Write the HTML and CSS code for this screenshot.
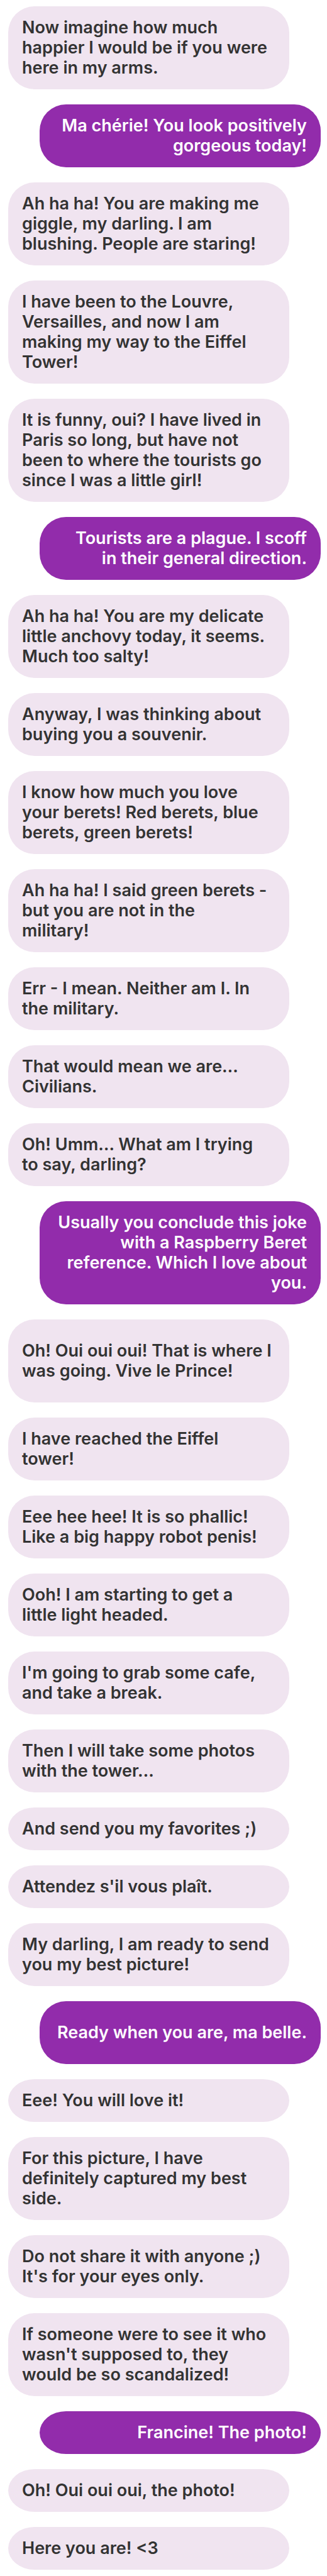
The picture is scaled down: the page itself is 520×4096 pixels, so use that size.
FILE: index.html
```
<!DOCTYPE html>
<html lang="en">
<head>
<meta charset="utf-8">
<meta name="viewport" content="width=device-width, initial-scale=1">
<title>Chat</title>
<link rel="stylesheet" href="styles.css">
</head>
<body>
<main class="chat">
<p class="bubble">Now imagine how much<br>happier I would be if you were<br>here in my arms.</p>
<p class="bubble sent">Ma chérie! You look positively<br>gorgeous today!</p>
<p class="bubble">Ah ha ha! You are making me<br>giggle, my darling. I am<br>blushing. People are staring!</p>
<p class="bubble">I have been to the Louvre,<br>Versailles, and now I am<br>making my way to the Eiffel<br>Tower!</p>
<p class="bubble">It is funny, oui? I have lived in<br>Paris so long, but have not<br>been to where the tourists go<br>since I was a little girl!</p>
<p class="bubble sent">Tourists are a plague. I scoff<br>in their general direction.</p>
<p class="bubble">Ah ha ha! You are my delicate<br>little anchovy today, it seems.<br>Much too salty!</p>
<p class="bubble">Anyway, I was thinking about<br>buying you a souvenir.</p>
<p class="bubble">I know how much you love<br>your berets! Red berets, blue<br>berets, green berets!</p>
<p class="bubble">Ah ha ha! I said green berets -<br>but you are not in the<br>military!</p>
<p class="bubble">Err - I mean. Neither am I. In<br>the military.</p>
<p class="bubble">That would mean we are…<br>Civilians.</p>
<p class="bubble">Oh! Umm… What am I trying<br>to say, darling?</p>
<p class="bubble sent">Usually you conclude this joke<br>with a Raspberry Beret<br>reference. Which I love about<br>you.</p>
<p class="bubble roomy">Oh! Oui oui oui! That is where I<br>was going. Vive le Prince!</p>
<p class="bubble">I have reached the Eiffel<br>tower!</p>
<p class="bubble">Eee hee hee! It is so phallic!<br>Like a big happy robot penis!</p>
<p class="bubble">Ooh! I am starting to get a<br>little light headed.</p>
<p class="bubble">I'm going to grab some cafe,<br>and take a break.</p>
<p class="bubble">Then I will take some photos<br>with the tower…</p>
<p class="bubble">And send you my favorites ;)</p>
<p class="bubble">Attendez s'il vous plaît.</p>
<p class="bubble">My darling, I am ready to send<br>you my best picture!</p>
<p class="bubble sent roomy">Ready when you are, ma belle.</p>
<p class="bubble">Eee! You will love it!</p>
<p class="bubble">For this picture, I have<br>definitely captured my best<br>side.</p>
<p class="bubble">Do not share it with anyone ;)<br>It's for your eyes only.</p>
<p class="bubble">If someone were to see it who<br>wasn't supposed to, they<br>would be so scandalized!</p>
<p class="bubble sent">Francine! The photo!</p>
<p class="bubble">Oh! Oui oui oui, the photo!</p>
<p class="bubble">Here you are! &lt;3</p>
</main>
</body>
</html>
```
FILE: styles.css
```
* {
  box-sizing: border-box;
}

body {
  margin: 0;
  background: #ffffff;
}

.chat {
  display: flex;
  flex-direction: column;
  gap: 24px;
  padding: 10px 10px 10px 13px;
}

.bubble {
  width: 90%;
  margin: 0;
  padding: 18px 22px;
  border-radius: 42px / min(42px, 50%);
  background: #f0e4f0;
  color: #333333;
  font: 600 27px/32px Inter, "Liberation Sans", sans-serif;
  white-space: nowrap;
}

.sent {
  align-self: flex-end;
  background: #922cab;
  color: #ffffff;
  text-align: right;
}

.roomy {
  padding-block: 34px;
}
```
